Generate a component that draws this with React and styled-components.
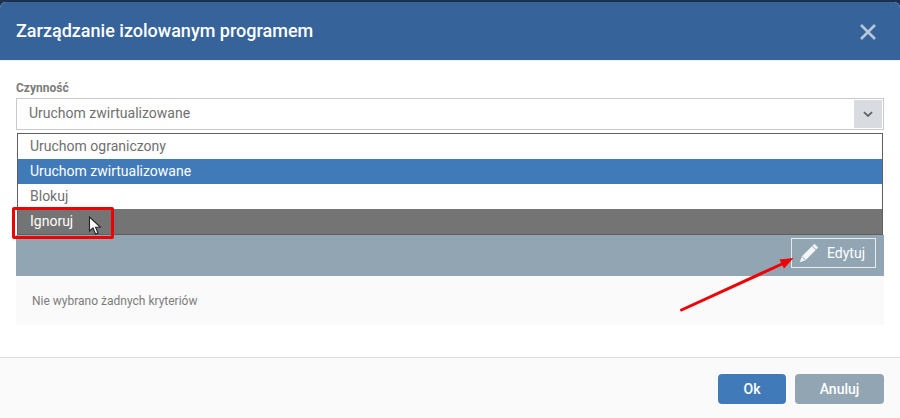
import React from "react";
import styled, { createGlobalStyle } from "styled-components";

const Global = createGlobalStyle`
  html, body { margin: 0; padding: 0; background: #1b2f4f; }
  body { font-family: Roboto, "Liberation Sans", sans-serif; overflow: hidden; }
`;
const Page = styled.div`
  position: relative; width: 900px; height: 418px; overflow: hidden;
  padding-top: 2px; box-sizing: border-box; background: #1b2f4f;
`;
const Modal = styled.div`
  height: 416px; display: flex; flex-direction: column; background: #fff;
  border-radius: 6px 6px 0 0; overflow: hidden;
`;
const Header = styled.header`
  height: 58px; flex: none; background: #35639a; display: flex; align-items: center;
  justify-content: space-between; padding: 0 23px 0 16px; border-bottom: 1px solid #eef1f4;
  box-sizing: content-box;
`;
const Title = styled.h1`
  margin: 0; font-size: 18px; font-weight: 500; color: #fff; line-height: 56px;
`;
const Close = styled.svg`
  width: 18px; height: 18px; display: block; margin-top: 2px;
`;
const Body = styled.main`
  flex: 1; padding: 20px 16px 0; display: flex; flex-direction: column;
`;
const Label = styled.label`
  font-size: 12px; font-weight: 700; color: #7b7b7b; line-height: 14px; height: 17px; display: block;
`;
const Field = styled.div`
  position: relative; height: 32px;
`;
const Select = styled.div`
  height: 32px; box-sizing: border-box; border: 1px solid #c9c9c9; background: #fff;
  display: flex; align-items: center; justify-content: space-between;
  padding: 1px 1px 1px 12px; font-size: 14px; line-height: 26px; color: #6f6f6f;
`;
const SelectText = styled.span`
  margin-top: -2px;
`;
const Caret = styled.span`
  width: 28px; height: 28px; background: #d8dce0; display: flex; align-items: center; justify-content: center;
`;
const List = styled.ul`
  position: absolute; left: 1px; right: 1px; top: 35px; margin: 0; padding: 0; list-style: none;
  background: #fff; border: 1px solid #5f5f5f; z-index: 2; box-sizing: border-box; height: 102px;
`;
const Option = styled.li`
  height: 25px; line-height: 25px; padding-left: 12px; font-size: 14px;
  color: ${(p) => (p.$state ? "#fff" : "#6f6f6f")};
  background: ${(p) => (p.$state === "selected" ? "#417ab9" : p.$state === "hover" ? "#747474" : "#fff")};
`;
const Section = styled.section`
  margin-top: 105px; display: flex; flex-direction: column;
`;
const Bar = styled.div`
  height: 41px; background: #92a5b3; display: flex; align-items: flex-start; justify-content: flex-end;
  padding: 3px 8px 0 0; box-sizing: border-box;
`;
const EditButton = styled.button`
  width: 85px; height: 30px; box-sizing: border-box; background: transparent;
  border: 1px solid #e6ebef; color: #fff; font: 400 14px Roboto, sans-serif;
  display: flex; align-items: center; gap: 8px; padding: 0 0 0 7px;
`;
const Empty = styled.div`
  height: 49px; background: #fafafa; display: flex; align-items: center; padding-left: 16px;
  font-size: 12px; color: #7c7c7c;
`;
const Footer = styled.footer`
  height: 61px; flex: none; border-top: 1px solid #dcdcdc; background: #fafafa;
  display: flex; justify-content: flex-end; align-items: flex-start; gap: 9px; padding: 16px 16px 0 0; box-sizing: border-box;
`;
const Action = styled.button`
  height: 30px; width: ${(p) => p.$w}px; border: 0; border-radius: 4px;
  background: ${(p) => (p.$primary ? "#417ab9" : "#92a5b3")}; color: #fff;
  font: 500 14px Roboto, sans-serif; padding: 0;
`;
const Highlight = styled.div`
  position: absolute; left: 12px; top: 207px; width: 102px; height: 32px; box-sizing: border-box;
  border: 3px solid #f00000; border-radius: 2px; z-index: 3;
`;
const Cursor = styled.svg`
  position: absolute; left: 88px; top: 216px; width: 14px; height: 20px; z-index: 4;
`;
const Arrow = styled.svg`
  position: absolute; left: 670px; top: 250px; width: 135px; height: 70px; z-index: 4;
`;

export default function App() {
  return (
    <Page>
      <Global />
      <Modal>
        <Header>
          <Title>Zarządzanie izolowanym programem</Title>
          <Close viewBox="0 0 18 18"><path d="M2 2 L16 16 M16 2 L2 16" stroke="#b9c8d9" strokeWidth="2.6" /></Close>
        </Header>
        <Body>
          <Label>Czynność</Label>
          <Field>
            <Select>
              <SelectText>Uruchom zwirtualizowane</SelectText>
              <Caret>
                <svg width="10" height="7" viewBox="0 0 10 7"><path d="M1 1.2 L5 5 L9 1.2" fill="none" stroke="#5f6468" strokeWidth="1.8" /></svg>
              </Caret>
            </Select>
            <List>
              <Option>Uruchom ograniczony</Option>
              <Option $state="selected">Uruchom zwirtualizowane</Option>
              <Option>Blokuj</Option>
              <Option $state="hover">Ignoruj</Option>
            </List>
          </Field>
          <Section>
            <Bar>
              <EditButton>
                <svg width="20" height="20" viewBox="0 0 20 20">
                  <path fill="#f4f6f8" d="M15.4 0.8 L19.2 4.6 L6.6 17.2 L0.8 19.2 L2.8 13.4 Z" />
                  <path d="M13.2 3 L17 6.8 M3 13.6 L6.4 17" stroke="#92a5b3" strokeWidth="1" />
                </svg>
                Edytuj
              </EditButton>
            </Bar>
            <Empty>Nie wybrano żadnych kryteriów</Empty>
          </Section>
        </Body>
        <Footer>
          <Action $primary $w={68}>Ok</Action>
          <Action $w={89}>Anuluj</Action>
        </Footer>
      </Modal>
      <Highlight />
      <Cursor viewBox="0 0 14 20">
        <path d="M1.5 1 L1.5 15 L5 12 L7.5 18 L10 17 L7.6 11.2 L12.2 11 Z" fill="#fff" stroke="#222" strokeWidth="1.1" />
      </Cursor>
      <Arrow viewBox="0 0 135 70">
        <line x1="11.5" y1="60" x2="112" y2="14" stroke="#f00000" strokeWidth="3" strokeLinecap="round" />
        <path d="M123.5 8 L109.5 9.5 L114 18.5 Z" fill="#f00000" />
      </Arrow>
    </Page>
  );
}
